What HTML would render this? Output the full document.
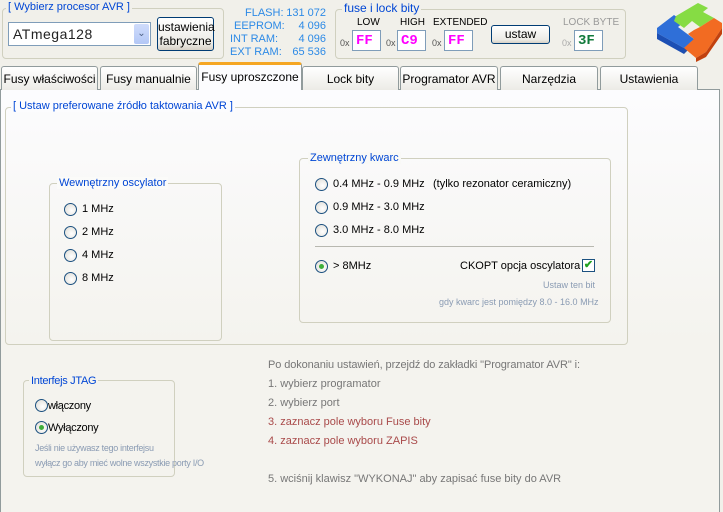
<!DOCTYPE html>
<html><head><meta charset="utf-8"><style>
*{margin:0;padding:0;box-sizing:border-box}
body{width:723px;height:512px;overflow:hidden;background:#f1f0ea;font-family:"Liberation Sans",Arial,sans-serif;font-size:11px;color:#000;position:relative}
.a{position:absolute;white-space:nowrap}
.grp{position:absolute;border:1px solid #d0d0bf;border-radius:4px}
.lg{position:absolute;background:inherit;color:#0046d5;padding:0 2px;font-size:11px;white-space:nowrap}
.blue{color:#2d8ae6}
.fb{position:absolute;background:#fff;border:1px solid #7f9db9;width:29px;height:21px;font-family:"Liberation Mono",monospace;font-weight:bold;font-size:14px;color:#f0f;padding:2px 0 0 3px}
.ox{position:absolute;font-size:9px;color:#555}
.btn{position:absolute;border:1px solid #003c74;border-radius:3px;background:linear-gradient(#fff,#ecebe6 80%,#d6d0c5);text-align:center;white-space:nowrap}
.tab{position:absolute;top:66px;height:24px;border:1px solid #919b9c;border-bottom:none;border-radius:3px 3px 0 0;background:linear-gradient(#fff,#ecebe6);text-align:center;padding-top:5px;font-size:12px;white-space:nowrap}
.r{position:absolute;width:13px;height:13px;border-radius:50%;border:1px solid #1c5180;background:radial-gradient(circle at 60% 60%,#fff,#dcdad3)}
.r.on::after{content:"";position:absolute;left:3px;top:3px;width:5px;height:5px;border-radius:50%;background:#3fae3a}
.t{position:absolute;font-size:11px;white-space:nowrap}
</style></head><body>
<div class="grp" style="left:2px;top:8px;width:222px;height:51px;background:#f1f0ea"></div>
<div class="lg" style="left:6px;top:1px;background:#f1f0ea">[ Wybierz procesor AVR ]</div>
<div class="a" style="left:8px;top:22px;width:143px;height:24px;background:#fff;border:1px solid #7f9db9"></div>
<div class="a" style="left:13px;top:26px;font-size:14px;color:#222;letter-spacing:0.5px">ATmega128</div>
<div class="a" style="left:134px;top:24px;width:15px;height:20px;background:linear-gradient(#cfdcfb,#b3c7f6);border-radius:2px;color:#4d6185;font-size:10px;text-align:center;line-height:20px">&#8964;</div>
<div class="btn" style="left:157px;top:17px;width:57px;height:34px;font-size:12px;line-height:14px;padding-top:2px">ustawienia<br>fabryczne</div>
<div class="a blue" style="left:230px;top:7px;width:96px;font-size:11px;line-height:13px">
<div style="display:flex;justify-content:space-between"><span style="padding-left:15px">FLASH:</span><span>131 072</span></div>
<div style="display:flex;justify-content:space-between"><span style="padding-left:4px">EEPROM:</span><span>4 096</span></div>
<div style="display:flex;justify-content:space-between"><span>INT RAM:</span><span>4 096</span></div>
<div style="display:flex;justify-content:space-between"><span>EXT RAM:</span><span>65 536</span></div>
</div>
<div class="grp" style="left:335px;top:9px;width:291px;height:50px;background:#f1f0ea"></div>
<div class="lg" style="left:342px;top:1px;background:#f1f0ea;font-size:12px">fuse i lock bity</div>
<div class="t" style="left:357px;top:17px;font-size:10px">LOW</div>
<div class="t" style="left:400px;top:17px;font-size:10px">HIGH</div>
<div class="t" style="left:433px;top:17px;font-size:10px">EXTENDED</div>
<div class="t" style="left:563px;top:17px;font-size:10px;color:#999">LOCK BYTE</div>
<div class="ox" style="left:340px;top:38px">0x</div><div class="fb" style="left:352px;top:30px">FF</div>
<div class="ox" style="left:386px;top:38px">0x</div><div class="fb" style="left:397px;top:30px">C9</div>
<div class="ox" style="left:432px;top:38px">0x</div><div class="fb" style="left:444px;top:30px">FF</div>
<div class="btn" style="left:491px;top:25px;width:59px;height:19px;font-size:12px;line-height:16px">ustaw</div>
<div class="ox" style="left:562px;top:38px;color:#aaa">0x</div><div class="fb" style="left:574px;top:30px;color:#107a3a">3F</div>
<svg class="a" style="left:654px;top:2px" width="69" height="60" viewBox="0 0 69 60">
<polygon points="3,26 20,13 30,20 24,25 40,37 30,46 3,31" fill="#2f6fd8"/>
<polygon points="3,31 30,46 30,52 3,37" fill="#1c4fb4"/>
<polygon points="30,46 40,37 40,42 30,52" fill="#244fa8"/>
<polygon points="22,14 44,1 54,6 49,10 60,16 46,25 38,19 30,26 20,19" fill="#86dc44"/>
<polygon points="46,25 60,16 68,21 68,26 52,50 42,56 30,46 40,37 34,32 40,28" fill="#f26b22"/>
<polygon points="42,56 52,50 68,26 68,32 52,55 42,60" fill="#c2410e"/>
</svg>
<div class="a" style="left:0;top:89px;width:720px;height:423px;border:1px solid #919b9c;border-bottom:none;background:linear-gradient(#fcfcfe,#f4f3ee 60%,#f4f3ee)"></div>
<div class="tab" style="left:1px;width:97px">Fusy właściwości</div>
<div class="tab" style="left:100px;width:97px">Fusy manualnie</div>
<div class="tab" style="left:302px;width:97px">Lock bity</div>
<div class="tab" style="left:400px;width:98px">Programator AVR</div>
<div class="tab" style="left:500px;width:98px">Narzędzia</div>
<div class="tab" style="left:600px;width:98px">Ustawienia</div>
<div class="tab" style="left:198px;top:62px;width:104px;height:28px;background:#fcfcfe;border-top:3px solid #f5a623;border-bottom:none;padding-top:5px">Fusy uproszczone</div>
<div class="grp" style="left:5px;top:107px;width:623px;height:238px"></div>
<div class="lg" style="left:11px;top:100px;background:#fcfcfe">[ Ustaw preferowane źródło taktowania AVR ]</div>
<div class="grp" style="left:49px;top:183px;width:173px;height:158px"></div>
<div class="lg" style="left:57px;top:177px;background:#fbfbf9">Wewnętrzny oscylator</div>
<div class="r" style="left:64px;top:203px"></div><div class="t" style="left:82px;top:203px">1 MHz</div>
<div class="r" style="left:64px;top:226px"></div><div class="t" style="left:82px;top:226px">2 MHz</div>
<div class="r" style="left:64px;top:249px"></div><div class="t" style="left:82px;top:249px">4 MHz</div>
<div class="r" style="left:64px;top:272px"></div><div class="t" style="left:82px;top:272px">8 MHz</div>
<div class="grp" style="left:299px;top:158px;width:312px;height:165px"></div>
<div class="lg" style="left:308px;top:152px;background:#f9f9f6">Zewnętrzny kwarc</div>
<div class="r" style="left:315px;top:178px"></div><div class="t" style="left:333px;top:178px">0.4 MHz - 0.9 MHz</div><div class="t" style="left:433px;top:178px">(tylko rezonator ceramiczny)</div>
<div class="r" style="left:315px;top:201px"></div><div class="t" style="left:333px;top:201px">0.9 MHz - 3.0 MHz</div>
<div class="r" style="left:315px;top:224px"></div><div class="t" style="left:333px;top:224px">3.0 MHz - 8.0 MHz</div>
<div class="a" style="left:315px;top:246px;width:279px;height:1px;background:#b8b8b0"></div>
<div class="r on" style="left:315px;top:260px"></div><div class="t" style="left:333px;top:260px">&gt; 8MHz</div>
<div class="t" style="left:460px;top:260px">CKOPT opcja oscylatora</div>
<div class="a" style="left:582px;top:259px;width:13px;height:13px;border:1px solid #1c5180;background:#fff;color:#21a121;font-size:11px;line-height:11px;text-align:center;font-weight:bold">✔</div>
<div class="t" style="left:543px;top:280px;font-size:9px;color:#8a9bb3">Ustaw ten bit</div>
<div class="t" style="left:439px;top:297px;font-size:9px;color:#8a9bb3">gdy kwarc jest pomiędzy 8.0 - 16.0 MHz</div>
<div class="grp" style="left:23px;top:380px;width:152px;height:97px"></div>
<div class="lg" style="left:29px;top:375px;background:#f4f3ee;letter-spacing:-0.3px">Interfejs JTAG</div>
<div class="r" style="left:35px;top:399px"></div><div class="t" style="left:48px;top:400px;letter-spacing:-0.3px">włączony</div>
<div class="r on" style="left:35px;top:421px"></div><div class="t" style="left:48px;top:422px;letter-spacing:-0.3px">Wyłączony</div>
<div class="t" style="left:35px;top:443px;font-size:9px;color:#8a9bb3;letter-spacing:-0.3px">Jeśli nie używasz tego interfejsu</div>
<div class="t" style="left:35px;top:458px;font-size:9px;color:#8a9bb3;letter-spacing:-0.3px">wyłącz go aby mieć wolne wszystkie porty I/O</div>
<div class="t" style="left:268px;top:359px;color:#777;letter-spacing:-0.1px">Po dokonaniu ustawień, przejdź do zakładki "Programator AVR" i:</div>
<div class="t" style="left:268px;top:378px;color:#777">1. wybierz programator</div>
<div class="t" style="left:268px;top:397px;color:#777">2. wybierz port</div>
<div class="t" style="left:268px;top:416px;color:#a94a4a">3. zaznacz pole wyboru Fuse bity</div>
<div class="t" style="left:268px;top:435px;color:#a94a4a">4. zaznacz pole wyboru ZAPIS</div>
<div class="t" style="left:268px;top:473px;color:#777">5. wciśnij klawisz "WYKONAJ" aby zapisać fuse bity do AVR</div>
</body></html>
